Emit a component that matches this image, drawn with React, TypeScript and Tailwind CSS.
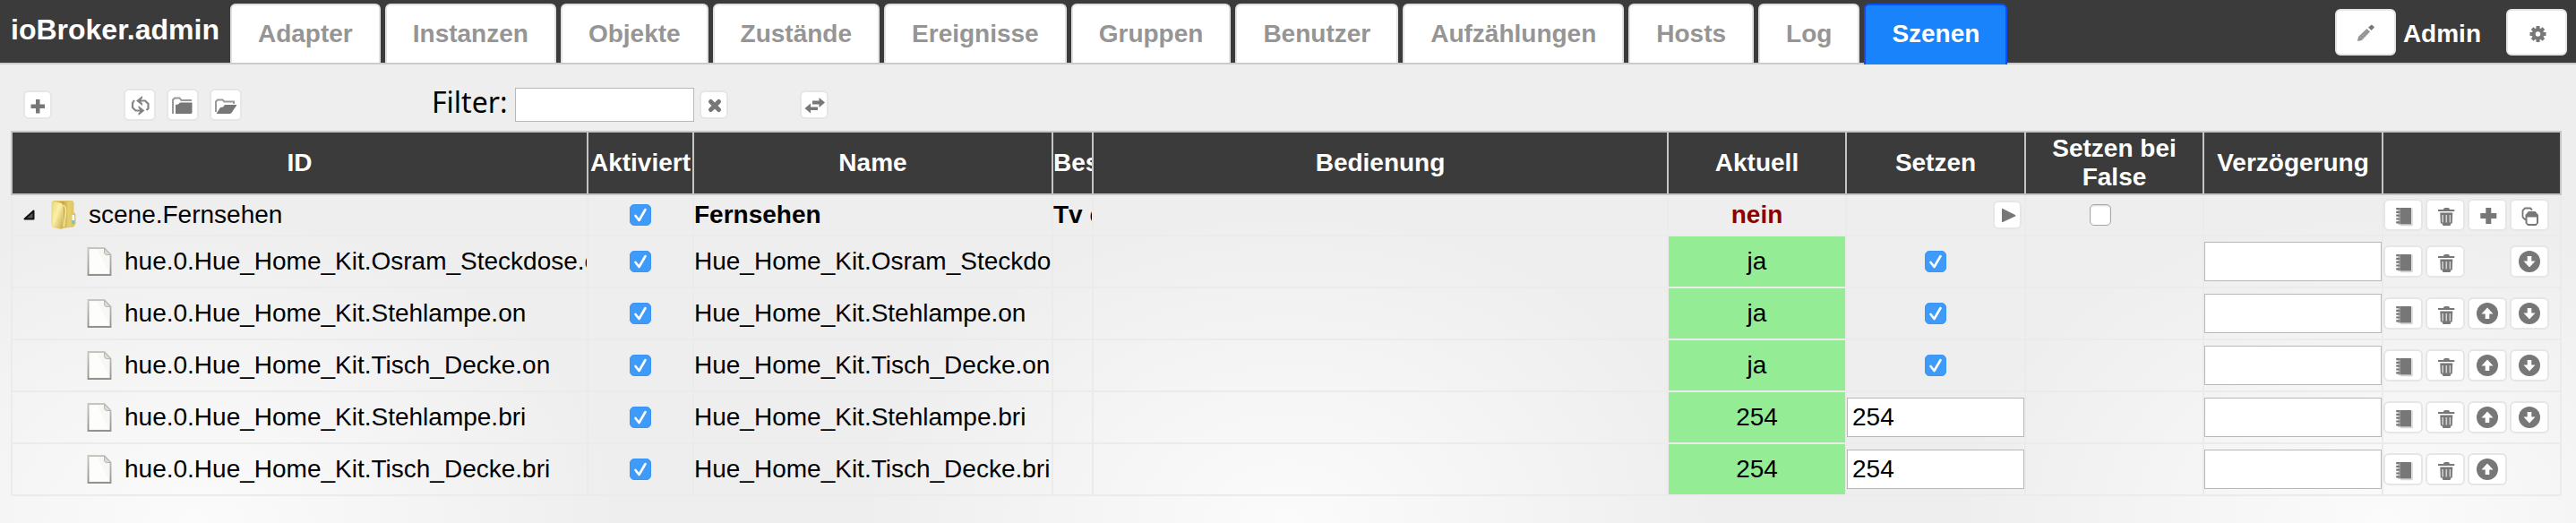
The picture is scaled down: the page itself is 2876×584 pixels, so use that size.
import React, { useState } from 'react';

type IconName =
  | 'plusThin' | 'plus' | 'refresh' | 'folder' | 'folderOpen' | 'close' | 'swap'
  | 'pencil' | 'gear' | 'play' | 'note' | 'trash' | 'copy' | 'up' | 'down';

const gearTeeth = [0, 45, 90, 135, 180, 225, 270, 315];

const shapes: Record<IconName, React.ReactNode> = {
  plusThin: <path d="M-2 -6h4.5v5.500h5.500v4.500h-5.500v5.500h-4.500v-5.500h-5.500v-4.500h5.500z" />,
  plus: <path d="M-1.700 -8h6v6h6v6h-6v6h-6v-6h-6v-6h6z" />,
  refresh: (
    <g>
      <path d="M0 -4.500H6L9.500 -1V4L7.500 6M2 6.500H-4.500L-8 3V-2L-6 -5" fill="none" stroke="currentColor" strokeWidth="2.200" strokeOpacity="0.9" />
      <path d="M-4 -4.500L3 -10V-7.500L0.500 -4.500L3 -1.500V1zM5.500 6.500L-1.500 1V3.500L1 6.500L-1.500 9.500V12z" fillOpacity="0.9" />
    </g>
  ),
  folder: (
    <g>
      <path d="M-11 10V-5.500L-9 -7.500H-3.500L-1.500 -5H10" fill="none" stroke="currentColor" strokeOpacity="0.75" strokeWidth="2" />
      <path d="M-8 10V0L-5 -0.500L-3 -2.500H10.500V9L9.500 10z" />
    </g>
  ),
  folderOpen: (
    <g>
      <path d="M-11 8V-3.500L-9 -5.500H-3.500L-1.500 -3.500H9V-1" fill="none" stroke="currentColor" strokeOpacity="0.75" strokeWidth="2" />
      <path d="M-10.500 10L-6 3L-3 2.500L-1 0H12.500L6.500 9L5 10z" />
    </g>
  ),
  close: <path d="M-3.500 -3.500L5.500 5.500M5.500 -3.500L-3.500 5.500" fill="none" stroke="currentColor" strokeWidth="5" strokeLinecap="round" />,
  swap: (
    <path d="M-2 -4.500H5.500V-8L12 -2.500L5.500 3V-0.500H-2zM4 2.500H-4V-1.500L-10.500 4L-4 9.500V6H4z" />
  ),
  pencil: (
    <g>
      <path d="M-9 10L-8 5L1.500 -4L5 -0.500L-4 9z" fillOpacity="0.8" />
      <path d="M3 -5.500L7 -8.500L10 -5.500L6.500 -2z" />
      <path d="M-6 6L2 -2M-4 8L4 0" fill="none" stroke="white" strokeOpacity="0.4" strokeDasharray="1.500 1.500" />
    </g>
  ),
  gear: (
    <g transform="translate(1.500 2)">
      {gearTeeth.map((angle) => (
        <rect key={angle} x="-2" y="-9" width="4" height="5" transform={'rotate(' + angle + ')'} />
      ))}
      <circle r="4.800" fill="none" stroke="currentColor" strokeWidth="4" />
    </g>
  ),
  play: <path d="M-6 -6.500Q-6 -7.500 -5 -7L9 0Q10 0.700 9 1.500L-5 8Q-6 8.500 -6 7.500z" />,
  note: (
    <g>
      <path d="M-3.700 -8H9V10.500H-3.700z" />
      <path d="M10 -7.500V11.500H-3" fill="none" stroke="currentColor" strokeOpacity="0.3" strokeWidth="1.500" />
      <path d="M-5.800 -8V11" fill="none" stroke="currentColor" strokeWidth="4" strokeDasharray="2.200 1.600" />
      <path d="M-4.800 -8V11" fill="none" stroke="currentColor" strokeOpacity="0.5" strokeWidth="1.500" />
    </g>
  ),
  trash: (
    <g>
      <path d="M-2 -6Q-2 -8 0 -8H3Q5 -8 5 -6zM-8 -6H10.300V-4H-8z" />
      <path d="M-5.700 -2.500H8.300L7.800 9.500H6.500L5.500 12H-2.500L-3.500 9.500H-5.200z" />
      <path d="M-2.800 0V8.500M1.300 0V8.500M5.400 0V8.500" fill="none" stroke="white" strokeOpacity="0.65" strokeWidth="1.600" />
    </g>
  ),
  copy: (
    <g>
      <path d="M-4 5H-5L-7.500 2.500V-5L-5 -7.500H1L3 -5.500" fill="none" stroke="currentColor" strokeWidth="1.800" />
      <path d="M-4.500 0L-1 -4H6.500L10 0V9L7.500 12H-2L-4.500 9z" />
      <path d="M-2.500 2.500H8V9L7 10H-1.500L-2.500 9z" fill="white" />
    </g>
  ),
  up: (
    <g>
      <circle r="12" />
      <path d="M0 -6.500L6.500 0.500H2.300V6H-2.300V0.500H-6.500z" fill="white" />
    </g>
  ),
  down: (
    <g>
      <circle r="12" />
      <path d="M0 6.500L6.500 -0.500H2.300V-6H-2.300V-0.500H-6.500z" fill="white" />
    </g>
  ),
};

function Icon({ name }: { name: IconName }) {
  return (
    <svg viewBox="-14 -14 28 28" className="size-7 shrink-0" fill="currentColor" aria-hidden="true">
      {shapes[name]}
    </svg>
  );
}

const buttonSizes = {
  sm: 'size-8',
  md: 'size-9',
  row: 'h-9 w-11',
  lg: 'h-[52px] w-[68px]',
};

function IconButton({ icon, label, size }: { icon: IconName; label: string; size: keyof typeof buttonSizes }) {
  return (
    <button
      type="button"
      aria-label={label}
      title={label}
      className={
        'flex shrink-0 items-center justify-center rounded-md border-2 border-[#e6e6e6] bg-white text-[#777777] hover:bg-gray-50 ' +
        buttonSizes[size]
      }
    >
      <Icon name={icon} />
    </button>
  );
}

function Checkbox({ label, initial }: { label: string; initial: boolean }) {
  const [checked, setChecked] = useState(initial);
  return (
    <span className="inline-grid size-6 place-items-center">
      <input
        type="checkbox"
        aria-label={label}
        checked={checked}
        onChange={(e) => setChecked(e.target.checked)}
        className="col-start-1 row-start-1 size-6 appearance-none rounded-[5px] border border-[#a6a6a6] bg-white shadow-[inset_0_1px_2px_#d4d4d4] checked:border-[#3c94f5] checked:bg-[#3f9bf9] checked:shadow-none"
      />
      {checked && (
        <svg viewBox="0 0 24 24" className="pointer-events-none col-start-1 row-start-1 size-6" fill="none" aria-hidden="true">
          <path d="M6.500 13L10.500 18L17.500 6" stroke="white" strokeWidth="2.600" strokeLinecap="round" strokeLinejoin="round" />
        </svg>
      )}
    </span>
  );
}

function FolderIcon() {
  return (
    <svg viewBox="0 0 28 32" className="h-8 w-7 shrink-0" aria-hidden="true">
      <defs>
        <linearGradient id="folderFront" x1="0" y1="0" x2="1" y2="1">
          <stop offset="0" stopColor="#ecd878" />
          <stop offset="0.450" stopColor="#faf0a8" />
          <stop offset="1" stopColor="#c9a843" />
        </linearGradient>
        <linearGradient id="folderBack" x1="0" y1="0" x2="1" y2="0">
          <stop offset="0.400" stopColor="#c4a13c" />
          <stop offset="0.700" stopColor="#e8d070" />
          <stop offset="1" stopColor="#dcbf58" />
        </linearGradient>
      </defs>
      <path d="M3 0.500H23Q25 0.500 25 3V13L27 15V26L25 29L12 30.500L3 28z" fill="url(#folderBack)" stroke="#dfc76a" />
      <path d="M1 2Q1 0.500 3 0.800L11 2.500Q13.500 3.500 13.500 6V30Q13 32 10.500 31.500L2.500 29.500Q1 29 1 27z" fill="url(#folderFront)" stroke="#e3cf78" strokeWidth="0.800" />
      <path d="M14 5Q17.500 8 16 16L14.500 29" fill="none" stroke="#f6e7a0" strokeWidth="1.500" />
      <rect x="23.500" y="16" width="2.500" height="6" fill="#fdfdf5" />
      <rect x="23.500" y="22" width="2.500" height="4" fill="#6fc3c9" />
    </svg>
  );
}

function FileIcon() {
  return (
    <svg viewBox="0 0 28 32" className="h-8 w-7 shrink-0" aria-hidden="true">
      <defs>
        <linearGradient id="paperEdge" x1="0" y1="0" x2="0" y2="1">
          <stop offset="0" stopColor="#c4c6c0" />
          <stop offset="1" stopColor="#90928c" />
        </linearGradient>
      </defs>
      <path d="M1.500 1H19.500L26.500 8.500V31H1.500z" fill="#f7f8f4" stroke="url(#paperEdge)" strokeWidth="1.800" />
      <path d="M3.500 3H12L24 27V29H3.500z" fill="white" fillOpacity="0.7" />
      <path d="M19.500 1.500V6Q20 8.500 22 8.500H26.500z" fill="#dcddd8" stroke="#b4b6b0" />
    </svg>
  );
}

const tabs = ['Adapter', 'Instanzen', 'Objekte', 'Zustände', 'Ereignisse', 'Gruppen', 'Benutzer', 'Aufzählungen', 'Hosts', 'Log', 'Szenen'];

type Row = { path: string; on?: boolean; current: string; value?: string; up?: boolean; down?: boolean };

const rows: Row[] = [
  { path: 'Hue_Home_Kit.Osram_Steckdose.on', on: true, current: 'ja', down: true },
  { path: 'Hue_Home_Kit.Stehlampe.on', on: true, current: 'ja', up: true, down: true },
  { path: 'Hue_Home_Kit.Tisch_Decke.on', on: true, current: 'ja', up: true, down: true },
  { path: 'Hue_Home_Kit.Stehlampe.bri', current: '254', value: '254', up: true, down: true },
  { path: 'Hue_Home_Kit.Tisch_Decke.bri', current: '254', value: '254', up: true },
];

const th = 'h-[72px] overflow-hidden border-y-2 border-r-2 border-[#c5c5c5] p-0 leading-8 font-bold first:border-l-2';
const td = 'overflow-hidden border-r-2 border-b-2 border-[#ebebeb] p-0 whitespace-nowrap first:border-l-2';
const field = 'block h-11 w-full border border-[#b8b8b8] bg-white px-[5px] text-[28px] outline-none focus:border-[#3f9bf9]';

function Header() {
  return (
    <header className="flex h-[72px] border-b-2 border-[#cccccc] bg-[#3b3b3b] font-bold text-white">
      <h1 className="flex items-center pr-3 pb-1 pl-3 text-[32px] leading-9">ioBroker.admin</h1>
      <nav className="flex gap-[5px] pt-1 text-[28px] leading-8">
        {tabs.map((tab) =>
          tab === 'Szenen' ? (
            <a key={tab} href="#szenen" aria-current="page" className="-mb-0.5 flex items-center rounded-t-md border-2 border-b-0 border-[#0d4dfb] bg-[#1983fb] px-[29px] pb-0.5">
              {tab}
            </a>
          ) : (
            <a key={tab} href={'#' + tab.toLowerCase()} className="flex items-center rounded-t-md border-2 border-b-0 border-[#e2e2e2] bg-white px-[29px] text-[#959595]">
              {tab}
            </a>
          )
        )}
      </nav>
      <div className="ml-auto flex items-center gap-2 pt-0.5 pr-2.5 text-[28px] leading-8">
        <IconButton icon="pencil" label="Bearbeiten" size="lg" />
        <span className="pt-1 pr-5">Admin</span>
        <IconButton icon="gear" label="Einstellungen" size="lg" />
      </div>
    </header>
  );
}

function Toolbar() {
  return (
    <div className="flex h-[74px] items-center pt-4 pl-[26px]">
      <IconButton icon="plusThin" label="Neue Szene" size="sm" />
      <div className="ml-20 flex gap-3">
        <IconButton icon="refresh" label="Aktualisieren" size="md" />
        <IconButton icon="folder" label="Alle zuklappen" size="md" />
        <IconButton icon="folderOpen" label="Alle aufklappen" size="md" />
      </div>
      <div className="ml-[212px] flex items-center">
        <label htmlFor="filter" className="pr-2 pb-1.5 font-['Noto_Sans',sans-serif] text-[32px] leading-10">
          Filter:
        </label>
        <input id="filter" type="text" className="mr-1.5 h-[38px] w-[200px] border border-[#b8b8b8] bg-white px-1 text-[28px] outline-none" />
        <IconButton icon="close" label="Filter löschen" size="sm" />
      </div>
      <div className="ml-20">
        <IconButton icon="swap" label="Ansicht wechseln" size="sm" />
      </div>
    </div>
  );
}

export default function App() {
  return (
    <div className="min-h-screen bg-[#eeeeee] bg-[radial-gradient(ellipse_480px_350px_at_7.6%_100%,#fbfbfb,transparent),radial-gradient(ellipse_480px_350px_at_50%_100%,#fbfbfb,transparent),radial-gradient(ellipse_480px_350px_at_92.5%_100%,#fbfbfb,transparent)] font-['Liberation_Sans',Arial,sans-serif] text-black">
      <Header />
      <main className="pr-4 pl-3">
        <div className="-ml-3">
          <Toolbar />
        </div>
        <table className="w-full table-fixed border-separate border-spacing-0 text-[28px] leading-8">
          <colgroup>
            <col className="w-[645px]" />
            <col className="w-[118px]" />
            <col className="w-[401px]" />
            <col className="w-[45px]" />
            <col />
            <col className="w-[199px]" />
            <col className="w-[200px]" />
            <col className="w-[199px]" />
            <col className="w-[200px]" />
            <col className="w-[199px]" />
          </colgroup>
          <thead className="bg-[#3b3b3b] text-white">
            <tr>
              <th className={th}>ID</th>
              <th className={th}>Aktiviert</th>
              <th className={th}>Name</th>
              <th className={th + ' text-left'}>Beschreibung</th>
              <th className={th}>Bedienung</th>
              <th className={th}>Aktuell</th>
              <th className={th}>Setzen</th>
              <th className={th + ' px-6'}>Setzen bei False</th>
              <th className={th}>Verzögerung</th>
              <th className={th} aria-label="Aktionen"></th>
            </tr>
          </thead>
          <tbody>
            <tr className="h-[46px]">
              <td className={td}>
                <div className="flex items-center pl-3">
                  <svg viewBox="0 0 13 12" className="h-3 w-[13px]" aria-hidden="true">
                    <path d="M1.500 10.500L11.500 1.500V10.500z" fill="#555555" stroke="#111111" strokeWidth="2" strokeLinejoin="round" />
                  </svg>
                  <span className="pr-3.5 pl-[18px]">
                    <FolderIcon />
                  </span>
                  <span>scene.Fernsehen</span>
                </div>
              </td>
              <td className={td}>
                <div className="flex justify-center">
                  <Checkbox label="Szene aktiviert" initial={true} />
                </div>
              </td>
              <td className={td + ' font-bold'}>Fernsehen</td>
              <td className={td + ' font-bold'}>Tv ein</td>
              <td className={td}></td>
              <td className={td + ' text-center font-bold text-[#8b0000]'}>nein</td>
              <td className={td}>
                <div className="flex justify-end pr-[3px]">
                  <IconButton icon="play" label="Szene ausführen" size="sm" />
                </div>
              </td>
              <td className={td}>
                <div className="flex justify-center pr-8">
                  <Checkbox label="Setzen bei False" initial={false} />
                </div>
              </td>
              <td className={td}></td>
              <td className={td}>
                <div className="flex gap-[3px]">
                  <IconButton icon="note" label="Bearbeiten" size="row" />
                  <IconButton icon="trash" label="Löschen" size="row" />
                  <IconButton icon="plus" label="Hinzufügen" size="row" />
                  <IconButton icon="copy" label="Kopieren" size="row" />
                </div>
              </td>
            </tr>
            {rows.map((row) => (
              <tr key={row.path} className="h-[58px]">
                <td className={td}>
                  <div className="flex items-center gap-3.5 pl-[83px]">
                    <FileIcon />
                    <span>{'hue.0.' + row.path}</span>
                  </div>
                </td>
                <td className={td}>
                  <div className="flex justify-center">
                    <Checkbox label={row.path + ' aktiviert'} initial={true} />
                  </div>
                </td>
                <td className={td}>{row.path}</td>
                <td className={td}></td>
                <td className={td}></td>
                <td className={td + ' bg-[#94ed94] bg-clip-padding text-center'}>{row.current}</td>
                <td className={td}>
                  {row.value ? (
                    <input type="text" aria-label={row.path + ' setzen'} defaultValue={row.value} className={field} />
                  ) : (
                    <div className="flex justify-center">
                      <Checkbox label={row.path + ' setzen'} initial={Boolean(row.on)} />
                    </div>
                  )}
                </td>
                <td className={td}></td>
                <td className={td}>
                  <input type="text" aria-label={row.path + ' Verzögerung'} className={field} />
                </td>
                <td className={td}>
                  <div className="flex gap-[3px]">
                    <IconButton icon="note" label="Bearbeiten" size="row" />
                    <IconButton icon="trash" label="Löschen" size="row" />
                    {row.up ? <IconButton icon="up" label="Nach oben" size="row" /> : <span className="w-11" />}
                    {row.down && <IconButton icon="down" label="Nach unten" size="row" />}
                  </div>
                </td>
              </tr>
            ))}
          </tbody>
        </table>
      </main>
    </div>
  );
}
